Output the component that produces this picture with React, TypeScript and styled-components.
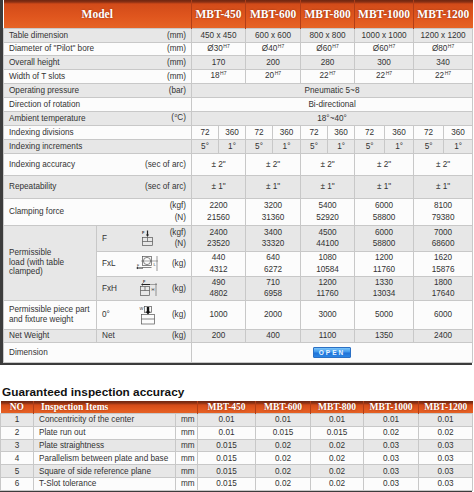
import React from 'react';
import styled, { createGlobalStyle } from 'styled-components';

const GlobalStyle = createGlobalStyle`
  html, body {
    margin: 0;
    padding: 0;
    background: #fff;
  }
  body {
    font-family: "Liberation Sans", Arial, sans-serif;
    color: #333;
  }
`;

const Page = styled.div`
  width: 472px;
`;

const Frame = styled.div`
  width: 469px;
  border-left: 3px solid #3c3c3c;
  border-bottom: 2px solid #3c3c3c;
`;

const Table = styled.table<{ $w: number }>`
  width: ${({ $w }) => $w}px;
  table-layout: fixed;
  border-collapse: collapse;
  font-size: 8.2px;
`;

const HeadRow = styled.tr<{ $h: number }>`
  height: ${({ $h }) => $h}px;
  background: linear-gradient(
    to bottom,
    #6e2611 0,
    #8a3014 2px,
    #d24b19 4px,
    #e0561e 60%,
    #e66426 100%
  );
`;

const HeadCell = styled.th<{ $align?: string; $size?: number }>`
  padding: 0 ${({ $align }) => ($align === 'left' ? '7px' : '0')};
  border-left: 1px solid #b23e17;
  color: #fff;
  font-family: "Liberation Serif", "Times New Roman", serif;
  font-weight: bold;
  font-size: ${({ $size }) => $size ?? 11.5}px;
  text-align: ${({ $align }) => $align ?? 'center'};
  text-shadow: 0 0 2px rgba(90, 20, 0, 0.6);
  white-space: nowrap;
  &:first-child {
    border-left: none;
  }
`;

const Row = styled.tr<{ $h: number; $alt?: boolean }>`
  height: ${({ $h }) => $h}px;
  background: ${({ $alt }) => ($alt ? '#e7e7e7' : '#fcfcfc')};
`;

const Cell = styled.td<{ $align?: string; $bg?: string }>`
  padding: 0 5px;
  border: 1px solid #c8c8c8;
  text-align: ${({ $align }) => $align ?? 'center'};
  vertical-align: middle;
  line-height: 11px;
  white-space: nowrap;
  color: #333;
  ${({ $bg }) => ($bg ? `background: ${$bg};` : '')}
`;

const Split = styled.div`
  display: flex;
  justify-content: space-between;
  align-items: center;
`;

const SubGrid = styled.div`
  display: grid;
  grid-template-columns: 22px 1fr auto;
  align-items: center;
`;

const IconSlot = styled.div`
  display: flex;
  justify-content: center;
  align-items: center;
`;

const Units = styled.div`
  text-align: right;
`;

const Stack = styled.div`
  line-height: 11.5px;
`;

const WrapText = styled.div`
  line-height: 9.5px;
`;

const Sup = styled.span`
  font-size: 5px;
  position: relative;
  top: -3px;
  margin-left: 0.5px;
`;

const OpenButton = styled.button`
  width: 38px;
  height: 11px;
  padding: 0;
  border: 1px solid #2a6fc4;
  border-radius: 1px;
  background: linear-gradient(to bottom, #7cc4f8 0%, #3d97ec 45%, #1f72d8 55%, #2b86e4 100%);
  color: #e8f4ff;
  font-family: "Liberation Sans", Arial, sans-serif;
  font-size: 6.5px;
  font-weight: bold;
  letter-spacing: 2px;
  line-height: 9px;
  vertical-align: middle;
`;

const Title = styled.h2`
  margin: 20px 0 2px 2px;
  font-family: "Liberation Sans", Arial, sans-serif;
  font-size: 11.8px;
  font-weight: bold;
  line-height: 14px;
  color: #111;
`;

const BottomFrame = styled.div`
  width: 472px;
  border-bottom: 2px solid #3c3c3c;
`;

const stroke = '#555';

const IconF: React.FC = () => (
  <svg width="14" height="16" viewBox="0 0 14 16">
    <text x="2" y="4" fontSize="4" fontWeight="bold" fill="#333" fontFamily="Liberation Sans">F</text>
    <line x1="7.5" y1="0.5" x2="7.5" y2="5" stroke="#222" strokeWidth="1.2" />
    <polygon points="6,4.5 9,4.5 7.5,7" fill="#222" />
    <rect x="2.5" y="7.5" width="10" height="8" fill="none" stroke={stroke} strokeWidth="0.7" />
    <line x1="2.5" y1="11.5" x2="12.5" y2="11.5" stroke={stroke} strokeWidth="0.7" />
    <line x1="7.5" y1="7.5" x2="7.5" y2="11.5" stroke={stroke} strokeWidth="0.7" />
  </svg>
);

const IconFxL: React.FC = () => (
  <svg width="24" height="18" viewBox="0 0 24 18">
    <rect x="6.5" y="1.5" width="9" height="9" fill="none" stroke={stroke} strokeWidth="0.7" />
    <circle cx="11" cy="6" r="3.6" fill="none" stroke={stroke} strokeWidth="0.7" />
    <line x1="5" y1="6" x2="17" y2="6" stroke={stroke} strokeWidth="0.5" />
    <line x1="6.5" y1="12.5" x2="15.5" y2="12.5" stroke={stroke} strokeWidth="0.7" />
    <line x1="7" y1="13" x2="2" y2="13" stroke="#222" strokeWidth="1" />
    <polygon points="2,11.8 2,14.2 0.2,13" fill="#222" />
    <text x="1" y="11.5" fontSize="3.5" fill="#333" fontFamily="Liberation Sans">F</text>
    <line x1="21" y1="1" x2="21" y2="16" stroke={stroke} strokeWidth="0.6" />
    <line x1="17" y1="6" x2="22" y2="6" stroke={stroke} strokeWidth="0.5" />
    <text x="17.5" y="11" fontSize="4" fill="#333" fontFamily="Liberation Sans">L</text>
  </svg>
);

const IconFxH: React.FC = () => (
  <svg width="24" height="18" viewBox="0 0 24 18">
    <text x="7" y="3.5" fontSize="3.8" fontWeight="bold" fill="#333" fontFamily="Liberation Sans">F</text>
    <line x1="14" y1="5.5" x2="7" y2="5.5" stroke="#222" strokeWidth="1" />
    <polygon points="7,4.3 7,6.7 5,5.5" fill="#222" />
    <rect x="4.5" y="7.5" width="9" height="9" fill="none" stroke={stroke} strokeWidth="0.7" />
    <line x1="4.5" y1="11.5" x2="13.5" y2="11.5" stroke={stroke} strokeWidth="0.7" />
    <line x1="9" y1="7.5" x2="9" y2="11.5" stroke={stroke} strokeWidth="0.7" />
    <line x1="20" y1="4" x2="20" y2="17" stroke={stroke} strokeWidth="0.6" />
    <line x1="14" y1="5.5" x2="21" y2="5.5" stroke={stroke} strokeWidth="0.5" />
    <text x="15.5" y="12" fontSize="4" fill="#333" fontFamily="Liberation Sans">H</text>
  </svg>
);

const IconW: React.FC = () => (
  <svg width="18" height="20" viewBox="0 0 18 20">
    <text x="0.5" y="4.5" fontSize="4" fill="#333" fontFamily="Liberation Sans">W</text>
    <rect x="5.5" y="1.5" width="7" height="6" fill="none" stroke={stroke} strokeWidth="0.7" />
    <rect x="7.8" y="2" width="2.4" height="5" fill="#111" />
    <polygon points="6.5,6.5 11.5,6.5 9,9.5" fill="#111" />
    <rect x="2.5" y="9.5" width="13" height="9.5" fill="none" stroke={stroke} strokeWidth="0.7" />
    <line x1="2.5" y1="14" x2="15.5" y2="14" stroke={stroke} strokeWidth="0.7" />
  </svg>
);

const models = ['MBT-450', 'MBT-600', 'MBT-800', 'MBT-1000', 'MBT-1200'];

type Cellish = React.ReactNode;

const H7 = (base: string) => (
  <>
    {base}
    <Sup>H7</Sup>
  </>
);

const two = (a: string, b: string) => (
  <Stack>
    {a}
    <br />
    {b}
  </Stack>
);

const simpleRows: { label: string; unit: string; values: Cellish[]; alt: boolean; h: number }[] = [
  { label: 'Table dimension', unit: '(mm)', values: ['450 x 450', '600 x 600', '800 x 800', '1000 x 1000', '1200 x 1200'], alt: true, h: 14 },
  { label: 'Diameter of "Pilot" bore', unit: '(mm)', values: [H7('Ø30'), H7('Ø40'), H7('Ø60'), H7('Ø60'), H7('Ø80')], alt: false, h: 13 },
  { label: 'Overall height', unit: '(mm)', values: ['170', '200', '280', '300', '340'], alt: true, h: 14 },
  { label: 'Width of T slots', unit: '(mm)', values: [H7('18'), H7('20'), H7('22'), H7('22'), H7('22')], alt: false, h: 14 },
];

const spanRows: { label: string; unit: Cellish; value: Cellish; alt: boolean }[] = [
  { label: 'Operating pressure', unit: '(bar)', value: 'Pneumatic 5~8', alt: true },
  { label: 'Direction of rotation', unit: '', value: 'Bi-directional', alt: false },
  {
    label: 'Ambient temperature',
    unit: (
      <>
        (<Sup>o</Sup>C)
      </>
    ),
    value: '18°~40°',
    alt: true,
  },
];

const clamping = [
  ['2200', '21560'],
  ['3200', '31360'],
  ['5400', '52920'],
  ['6000', '58800'],
  ['8100', '79380'],
];

const loadF = [
  ['2400', '23520'],
  ['3400', '33320'],
  ['4500', '44100'],
  ['6000', '58800'],
  ['7000', '68600'],
];

const loadL = [
  ['440', '4312'],
  ['640', '6272'],
  ['1080', '10584'],
  ['1200', '11760'],
  ['1620', '15876'],
];

const loadH = [
  ['490', '4802'],
  ['710', '6958'],
  ['1200', '11760'],
  ['1330', '13034'],
  ['1800', '17640'],
];

const inspection = [
  ['1', 'Concentricity of the center', '0.01', '0.01', '0.01', '0.01', '0.01'],
  ['2', 'Plate run out', '0.01', '0.015', '0.015', '0.02', '0.02'],
  ['3', 'Plate straightness', '0.015', '0.02', '0.02', '0.03', '0.03'],
  ['4', 'Parallelism between plate and base', '0.015', '0.02', '0.02', '0.03', '0.03'],
  ['5', 'Square of side reference plane', '0.015', '0.02', '0.02', '0.03', '0.03'],
  ['6', 'T-Slot tolerance', '0.015', '0.02', '0.02', '0.03', '0.03'],
];

const specCols = [93, 95, 27, 27, 27, 28, 27, 27, 30, 29, 30, 29];
const inspCols = [33, 142, 22, 58, 55, 53, 55, 54];

const LabelUnit: React.FC<{ label: Cellish; unit?: Cellish }> = ({ label, unit }) => (
  <Split>
    <span>{label}</span>
    <Units>{unit}</Units>
  </Split>
);

const App: React.FC = () => {
  return (
    <Page>
      <GlobalStyle />
      <Frame>
        <Table $w={469}>
          <colgroup>
            {specCols.map((w, i) => (
              <col key={i} style={{ width: w }} />
            ))}
          </colgroup>
          <thead>
            <HeadRow $h={28}>
              <HeadCell colSpan={2}>Model</HeadCell>
              {models.map((m) => (
                <HeadCell key={m} colSpan={2}>
                  {m}
                </HeadCell>
              ))}
            </HeadRow>
          </thead>
          <tbody>
            {simpleRows.map((r) => (
              <Row key={r.label} $h={r.h} $alt={r.alt}>
                <Cell colSpan={2} $align="left">
                  <LabelUnit label={r.label} unit={r.unit} />
                </Cell>
                {r.values.map((v, i) => (
                  <Cell key={i} colSpan={2}>
                    {v}
                  </Cell>
                ))}
              </Row>
            ))}
            {spanRows.map((r) => (
              <Row key={r.label} $h={14} $alt={r.alt}>
                <Cell colSpan={2} $align="left">
                  <LabelUnit label={r.label} unit={r.unit} />
                </Cell>
                <Cell colSpan={10}>{r.value}</Cell>
              </Row>
            ))}
            <Row $h={14}>
              <Cell colSpan={2} $align="left">
                Indexing divisions
              </Cell>
              {models.map((m) => (
                <React.Fragment key={m}>
                  <Cell>72</Cell>
                  <Cell>360</Cell>
                </React.Fragment>
              ))}
            </Row>
            <Row $h={14} $alt>
              <Cell colSpan={2} $align="left">
                Indexing increments
              </Cell>
              {models.map((m) => (
                <React.Fragment key={m}>
                  <Cell>5°</Cell>
                  <Cell>1°</Cell>
                </React.Fragment>
              ))}
            </Row>
            <Row $h={22}>
              <Cell colSpan={2} $align="left">
                <LabelUnit label="Indexing accuracy" unit="(sec of arc)" />
              </Cell>
              {models.map((m) => (
                <Cell key={m} colSpan={2}>
                  ± 2"
                </Cell>
              ))}
            </Row>
            <Row $h={23} $alt>
              <Cell colSpan={2} $align="left">
                <LabelUnit label="Repeatability" unit="(sec of arc)" />
              </Cell>
              {models.map((m) => (
                <Cell key={m} colSpan={2}>
                  ± 1"
                </Cell>
              ))}
            </Row>
            <Row $h={27}>
              <Cell colSpan={2} $align="left">
                <LabelUnit label="Clamping force" unit={two('(kgf)', '(N)')} />
              </Cell>
              {clamping.map(([a, b], i) => (
                <Cell key={i} colSpan={2}>
                  {two(a, b)}
                </Cell>
              ))}
            </Row>
            <Row $h={26} $alt>
              <Cell rowSpan={3} $align="left" $bg="#e7e7e7">
                <WrapText>
                  Permissible
                  <br />
                  load (with table
                  <br />
                  clamped)
                </WrapText>
              </Cell>
              <Cell $align="left">
                <SubGrid>
                  <span>F</span>
                  <IconSlot>
                    <IconF />
                  </IconSlot>
                  <Units>{two('(kgf)', '(N)')}</Units>
                </SubGrid>
              </Cell>
              {loadF.map(([a, b], i) => (
                <Cell key={i} colSpan={2}>
                  {two(a, b)}
                </Cell>
              ))}
            </Row>
            <Row $h={25}>
              <Cell $align="left">
                <SubGrid>
                  <span>FxL</span>
                  <IconSlot>
                    <IconFxL />
                  </IconSlot>
                  <Units>(kg)</Units>
                </SubGrid>
              </Cell>
              {loadL.map(([a, b], i) => (
                <Cell key={i} colSpan={2}>
                  {two(a, b)}
                </Cell>
              ))}
            </Row>
            <Row $h={24} $alt>
              <Cell $align="left">
                <SubGrid>
                  <span>FxH</span>
                  <IconSlot>
                    <IconFxH />
                  </IconSlot>
                  <Units>(kg)</Units>
                </SubGrid>
              </Cell>
              {loadH.map(([a, b], i) => (
                <Cell key={i} colSpan={2}>
                  {two(a, b)}
                </Cell>
              ))}
            </Row>
            <Row $h={29}>
              <Cell $align="left">
                <WrapText>
                  Permissible piece part
                  <br />
                  and fixture weight
                </WrapText>
              </Cell>
              <Cell $align="left">
                <SubGrid>
                  <span>0°</span>
                  <IconSlot>
                    <IconW />
                  </IconSlot>
                  <Units>(kg)</Units>
                </SubGrid>
              </Cell>
              {['1000', '2000', '3000', '5000', '6000'].map((v) => (
                <Cell key={v} colSpan={2}>
                  {v}
                </Cell>
              ))}
            </Row>
            <Row $h={13} $alt>
              <Cell $align="left">Net Weight</Cell>
              <Cell $align="left">
                <LabelUnit label="Net" unit="(kg)" />
              </Cell>
              {['200', '400', '1100', '1350', '2400'].map((v) => (
                <Cell key={v} colSpan={2}>
                  {v}
                </Cell>
              ))}
            </Row>
            <Row $h={20}>
              <Cell colSpan={2} $align="left">
                Dimension
              </Cell>
              <Cell colSpan={10}>
                <OpenButton type="button">OPEN</OpenButton>
              </Cell>
            </Row>
          </tbody>
        </Table>
      </Frame>

      <Title>Guaranteed inspection accuracy</Title>

      <BottomFrame>
        <Table $w={472}>
          <colgroup>
            {inspCols.map((w, i) => (
              <col key={i} style={{ width: w }} />
            ))}
          </colgroup>
          <thead>
            <HeadRow $h={13}>
              <HeadCell $size={9.5}>NO</HeadCell>
              <HeadCell colSpan={2} $align="left" $size={9.5}>
                Inspection Items
              </HeadCell>
              {models.map((m) => (
                <HeadCell key={m} $size={9.5}>
                  {m}
                </HeadCell>
              ))}
            </HeadRow>
          </thead>
          <tbody>
            {inspection.map(([no, item, ...vals], i) => (
              <Row key={no} $h={12.8} $alt={i % 2 === 0}>
                <Cell>{no}</Cell>
                <Cell $align="left">{item}</Cell>
                <Cell>mm</Cell>
                {vals.map((v, j) => (
                  <Cell key={j}>{v}</Cell>
                ))}
              </Row>
            ))}
          </tbody>
        </Table>
      </BottomFrame>
    </Page>
  );
};

export default App;
